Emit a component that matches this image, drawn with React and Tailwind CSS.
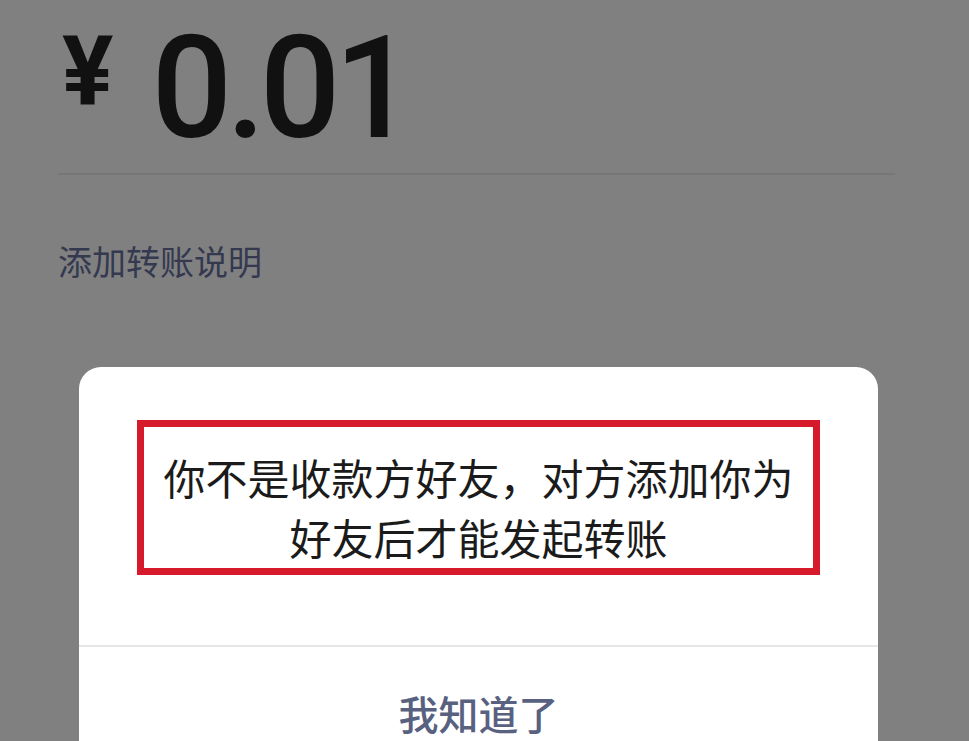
export default function App() {
  return (
    <div className="w-[969px] h-[741px] overflow-hidden bg-[#808080] flex flex-col">
      <div className="h-[173px] shrink-0 flex items-start pl-[62px]">
        <span className="mt-[23px] text-[96px] leading-none font-bold text-[#111] font-['Roboto',sans-serif]">¥</span>
        <span className="ml-[38px] mt-[18px] text-[142px] leading-none font-medium tracking-[-6px] text-[#111] font-['Roboto',sans-serif]">0.01</span>
      </div>
      <div className="ml-[58px] h-[2px] w-[837px] shrink-0 bg-[#777777]" />
      <div className="pl-[58px] mt-[64px] h-[44px] shrink-0 flex items-center text-[34px] leading-none text-[#343950] font-['Noto_Sans_CJK_SC',sans-serif]">
        添加转账说明
      </div>
      <div className="ml-[79px] mt-[84px] w-[799px] shrink-0 bg-white rounded-t-[22px] flex flex-col">
        <div className="mx-[58px] mt-[53px] h-[155px] pt-[18px] border-[7px] border-[#d6192b] flex flex-col items-center justify-center text-[42px] leading-[60px] text-[#1b1b1b] font-['Noto_Sans_CJK_SC',sans-serif]">
          <p>你不是收款方好友，对方添加你为</p>
          <p>好友后才能发起转账</p>
        </div>
        <div className="mt-[70px] h-[2px] bg-[#e6e6e6]" />
        <div className="h-[140px] flex justify-center pt-[46px]">
          <span className="text-[40px] leading-none font-medium text-[#58617f] font-['Noto_Sans_CJK_SC',sans-serif]">我知道了</span>
        </div>
      </div>
    </div>
  );
}
